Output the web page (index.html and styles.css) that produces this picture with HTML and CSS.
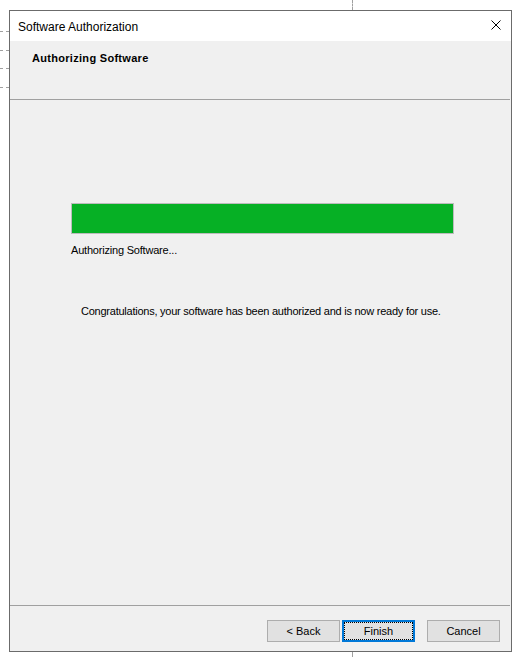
FILE: index.html
```html
<!DOCTYPE html>
<html lang="en">
<head>
    <meta charset="UTF-8">
    <meta name="viewport" content="width=device-width, initial-scale=1.0">
    <title>Software Authorization</title>
    <link rel="stylesheet" href="styles.css">
</head>
<body>
    <div class="guide guide-h" style="top: 31px;"></div>
    <div class="guide guide-h" style="top: 50px;"></div>
    <div class="guide guide-h" style="top: 68px;"></div>
    <div class="guide guide-h" style="top: 87px;"></div>
    <div class="guide guide-v guide-top"></div>
    <div class="guide guide-v guide-bottom"></div>

    <div class="window">
        <div class="titlebar">
            <span class="title">Software Authorization</span>
            <svg class="close" width="10" height="10" viewBox="0 0 10 10">
                <path d="M0.5 0.5 L9.5 9.5 M9.5 0.5 L0.5 9.5" stroke="#000" stroke-width="1" fill="none"/>
            </svg>
        </div>
        <div class="header">
            <h1>Authorizing Software</h1>
        </div>
        <div class="separator"></div>
        <div class="content">
            <div class="progress">
                <div class="progress-fill" style="width: 100%;"></div>
            </div>
            <p class="status">Authorizing Software...</p>
            <p class="message">Congratulations, your software has been authorized and is now ready for use.</p>
        </div>
        <div class="separator"></div>
        <div class="footer">
            <button class="btn">&lt; Back</button>
            <button class="btn btn-default"><span class="focus">Finish</span></button>
            <button class="btn btn-cancel">Cancel</button>
        </div>
    </div>
</body>
</html>
```

FILE: styles.css
```css
body {
    margin: 0;
    padding: 0;
    background-color: #fff;
    font-family: 'Liberation Sans', Arial, sans-serif;
    font-size: 11px;
    color: #000;
    position: relative;
    height: 657px;
    overflow: hidden;
}
.guide {
    position: absolute;
}
.guide-h {
    left: 0;
    width: 9px;
    border-top: 1px dashed #a0a0a0;
}
.guide-v {
    left: 352px;
    border-left: 1px dashed #a0a0a0;
}
.guide-top {
    top: 0;
    height: 10px;
}
.guide-bottom {
    top: 652px;
    height: 5px;
}
.window {
    position: relative;
    margin: 10px 0 0 9px;
    width: 503px;
    height: 642px;
    box-sizing: border-box;
    border: 1px solid #6b6b6b;
    background-color: #f0f0f0;
    display: flex;
    flex-direction: column;
}
.titlebar {
    height: 30px;
    background-color: #fff;
    display: flex;
    align-items: center;
    justify-content: space-between;
    padding: 0 10px 0 8px;
}
.title {
    font-size: 12px;
    color: #000;
    margin-top: 1px;
}
.close {
    display: block;
    margin-top: -2px;
}
.header {
    height: 58px;
    padding: 11px 0 0 22px;
    box-sizing: border-box;
}
h1 {
    margin: 0;
    font-size: 11px;
    font-weight: bold;
    line-height: 13px;
    letter-spacing: 0.3px;
}
.separator {
    height: 1px;
    background-color: #a0a0a0;
    margin-right: 1px;
}
.content {
    flex: 1;
    padding: 103px 0 0 61px;
}
.progress {
    width: 383px;
    height: 31px;
    box-sizing: border-box;
    border: 1px solid #bcbcbc;
    background-color: #e6e6e6;
}
.progress-fill {
    height: 100%;
    background-color: #06b025;
}
.status {
    margin: 10px 0 0 0;
    line-height: 13px;
    letter-spacing: -0.2px;
}
.message {
    margin: 48px 0 0 10px;
    line-height: 13px;
    letter-spacing: -0.24px;
}
.footer {
    height: 45px;
    display: flex;
    justify-content: flex-end;
    align-items: flex-start;
    padding: 14px 11px 0 0;
    box-sizing: border-box;
}
.btn {
    width: 73px;
    height: 22px;
    box-sizing: border-box;
    border: 1px solid #adadad;
    background-color: #e1e1e1;
    font-family: 'Liberation Sans', Arial, sans-serif;
    font-size: 11px;
    color: #000;
    padding: 0;
    margin: 0;
}
.btn-default {
    margin-left: 2px;
    border: 2px solid #0078d7;
    padding: 0;
}
.focus {
    display: block;
    height: 100%;
    box-sizing: border-box;
    border: 1px dotted #000;
    line-height: 16px;
}
.btn-cancel {
    margin-left: 12px;
}
```
